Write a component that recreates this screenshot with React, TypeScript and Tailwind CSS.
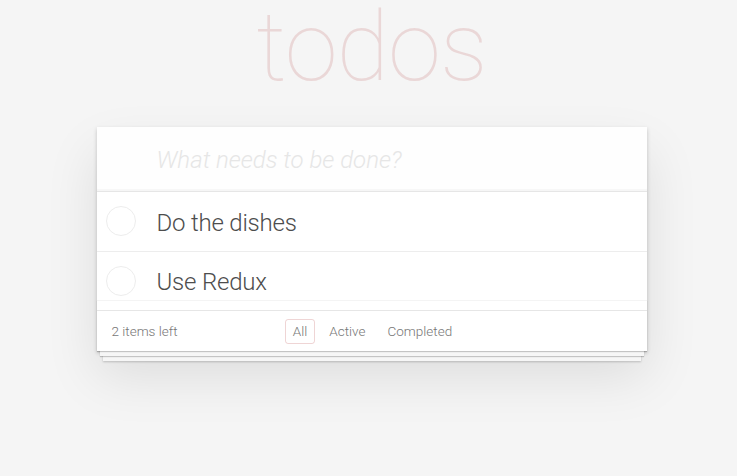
import React from 'react';

const todos = [
  { id: 1, text: 'Do the dishes' },
  { id: 2, text: 'Use Redux' },
];

function TodoItem({ text, last }: { text: string; last: boolean }) {
  return (
    <li className={`flex items-center text-[24px] ${last ? '' : 'border-b border-[#ededed]'}`}>
      <span className="ml-[9px] w-[30px] h-[30px] shrink-0 rounded-full border border-[#ededed]" />
      <label className="block pl-[21px] pt-[16.5px] pb-[13.5px] leading-[28.5px] text-[#4d4d4d] font-light tracking-[-0.2px]">{text}</label>
    </li>
  );
}

export default function App() {
  return (
    <div
      className="min-h-screen bg-[#f5f5f5] pl-[6px]"
      style={{ fontFamily: 'Roboto, "Noto Sans", sans-serif' }}
    >
      <div className="max-w-[550px] mx-auto">
        <h1 className="h-[127px] pt-[1px] text-center text-[96px] leading-[92px] tracking-[-1px] font-thin text-[rgba(175,47,47,0.15)]">
          todos
        </h1>
        <section className="relative bg-white shadow-[0_2px_4px_0_rgba(0,0,0,0.2),0_25px_50px_0_rgba(0,0,0,0.1)]">
          <div className="pr-4 pl-[60px] pt-[17px] pb-[15px] bg-[rgba(0,0,0,0.003)] shadow-[inset_0_-2px_1px_rgba(0,0,0,0.03)]">
            <input
              className="w-full text-[24px] h-[32px] leading-[32px] italic font-light text-[#4d4d4d] placeholder:text-[#e6e6e6] outline-none bg-transparent"
              placeholder="What needs to be done?"
            />
          </div>
          <ul className="border-t border-[#e6e6e6]">
            {todos.map((t, i) => (
              <TodoItem key={t.id} text={t.text} last={i === todos.length - 1} />
            ))}
          </ul>
          <footer className="relative grid grid-cols-[1fr_auto_1fr] items-center h-[41px] px-[15px] border-t border-[#e6e6e6] text-[13.5px] text-[#777] font-light before:content-[''] before:absolute before:left-0 before:right-0 before:bottom-0 before:h-[51px] before:border-t before:border-[#f4f4f4] before:overflow-hidden before:pointer-events-none before:shadow-[0_1px_1px_rgba(0,0,0,0.2),0_8px_0_-3px_#f6f6f6,0_9px_1px_-3px_rgba(0,0,0,0.2),0_16px_0_-6px_#f6f6f6,0_17px_2px_-6px_rgba(0,0,0,0.2)]">
            <span className="relative">2 items left</span>
            <ul className="relative flex ml-[2px]">
              <li>
                <a className="block m-[3px] px-[7px] py-[2px] leading-[19px] border border-[rgba(175,47,47,0.2)] rounded-[3px]">All</a>
              </li>
              <li>
                <a className="block m-[3px] px-[7px] py-[2px] leading-[19px] border border-transparent rounded-[3px]">Active</a>
              </li>
              <li>
                <a className="block m-[3px] px-[7px] py-[2px] leading-[19px] border border-transparent rounded-[3px]">Completed</a>
              </li>
            </ul>
            <span />
          </footer>
        </section>
      </div>
    </div>
  );
}
